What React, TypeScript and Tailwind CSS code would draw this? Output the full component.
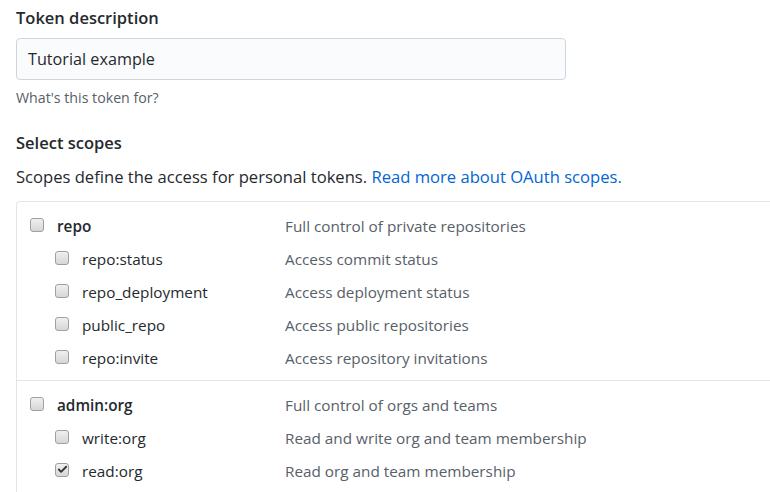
import { Check } from 'lucide-react';

type Scope = {
  name: string;
  desc: string;
  checked?: boolean;
  children?: Scope[];
};

const scopes: Scope[] = [
  {
    name: 'repo',
    desc: 'Full control of private repositories',
    children: [
      { name: 'repo:status', desc: 'Access commit status' },
      { name: 'repo_deployment', desc: 'Access deployment status' },
      { name: 'public_repo', desc: 'Access public repositories' },
      { name: 'repo:invite', desc: 'Access repository invitations' },
    ],
  },
  {
    name: 'admin:org',
    desc: 'Full control of orgs and teams',
    children: [
      { name: 'write:org', desc: 'Read and write org and team membership' },
      { name: 'read:org', desc: 'Read org and team membership', checked: true },
    ],
  },
];

function Box({ checked }: { checked?: boolean }) {
  return (
    <span className="mt-[-4px] flex h-[14px] w-[14px] shrink-0 items-center justify-center rounded-[3px] border border-[#a0a0a0] bg-gradient-to-b from-[#f0f0f0] to-[#d6d6d6]">
      {checked && <Check size={11} strokeWidth={4} className="text-[#333]" />}
    </span>
  );
}

function Row({ scope, child }: { scope: Scope; child?: boolean }) {
  return (
    <div className="flex h-[33px] items-center">
      <div className={`flex w-[268px] shrink-0 items-center ${child ? 'pl-[38px]' : 'pl-[13px]'}`}>
        <Box checked={scope.checked} />
        <span className={`ml-[13px] text-[#24292e] ${child ? '' : 'font-semibold'}`}>{scope.name}</span>
      </div>
      <span className="text-[#586069]">{scope.desc}</span>
    </div>
  );
}

export default function App() {
  return (
    <div className="h-[492px] w-[770px] overflow-hidden bg-white pl-4 pt-[5px] text-[16px] text-[#24292e] [font-family:'Open_Sans',sans-serif]">
      <div className="text-[16.5px] font-semibold leading-[26px]">Token description</div>
      <input
        readOnly
        value="Tutorial example"
        className="mt-[7px] h-[42px] w-[550px] rounded-[4px] border border-[#d1d5da] bg-[#fafbfc] px-[11px] text-[16.2px] text-[#24292e] outline-none"
      />
      <div className="mt-[8px] text-[14.2px] leading-[20px] text-[#586069]">What's this token for?</div>
      <div className="mt-[22px] text-[16.5px] font-semibold leading-[26px]">Select scopes</div>
      <div className="mt-[8px] text-[16.6px] leading-[26px]">
        Scopes define the access for personal tokens.{' '}
        <a className="text-[#0366d6]">Read more about OAuth scopes.</a>
      </div>
      <div className="mt-[11px] rounded-tl-[4px] border-l border-t border-[#e1e4e8] text-[15.3px]">
        {scopes.map((s) => (
          <div key={s.name} className="border-b border-[#e1e4e8] pb-[5px] pt-[8px]">
            <Row scope={s} />
            {s.children?.map((c) => <Row key={c.name} scope={c} child />)}
          </div>
        ))}
      </div>
    </div>
  );
}
